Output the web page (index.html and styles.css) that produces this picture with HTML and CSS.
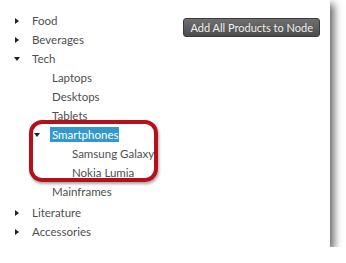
FILE: index.html
```html
<!DOCTYPE html>
<html>
<head>
    <title>Product Tree</title>
    <link rel="stylesheet" href="styles.css">
</head>
<body>
    <div class="panel">
        <ul class="tree">
            <li><span class="toggle closed"></span><span class="label">Food</span></li>
            <li><span class="toggle closed"></span><span class="label">Beverages</span></li>
            <li>
                <span class="toggle open"></span><span class="label">Tech</span>
                <ul>
                    <li><span class="label">Laptops</span></li>
                    <li><span class="label">Desktops</span></li>
                    <li><span class="label">Tablets</span></li>
                    <li class="marked">
                        <span class="toggle open"></span><span class="label selected">Smartphones</span>
                        <ul>
                            <li><span class="label">Samsung Galaxy</span></li>
                            <li><span class="label">Nokia Lumia</span></li>
                        </ul>
                    </li>
                    <li><span class="label">Mainframes</span></li>
                </ul>
            </li>
            <li><span class="toggle closed"></span><span class="label">Literature</span></li>
            <li><span class="toggle closed"></span><span class="label">Accessories</span></li>
        </ul>

        <div class="actions">
            <button class="btn">Add All Products to Node</button>
        </div>
    </div>
</body>
</html>
```

FILE: styles.css
```css
body {
    margin: 0;
    background-color: white;
    font-family: Lato, "Open Sans", sans-serif;
}

.panel {
    width: 330px;
    height: 247px;
    background-color: white;
    box-shadow: 4px 4px 8px rgba(0, 0, 0, 0.6);
    display: flex;
    justify-content: space-between;
}

.tree,
.tree ul {
    list-style: none;
    margin: 0;
    padding: 0;
}

.tree {
    padding: 11px 0 0 12px;
}

.tree ul {
    padding-left: 20px;
}

.tree > li > ul {
    padding-bottom: 2px;
}

.tree li {
    position: relative;
    font-size: 11.5px;
    color: #4f4f4f;
    line-height: 19px;
}

.label {
    display: inline-block;
    margin: 2px 0 2px 18px;
    padding: 0 2px;
    line-height: 15px;
}

.toggle {
    position: absolute;
    left: 3px;
    top: 7px;
    width: 0;
    height: 0;
}

.toggle.closed {
    border-top: 3px solid transparent;
    border-bottom: 3px solid transparent;
    border-left: 4px solid #222;
}

.toggle.open {
    top: 8px;
    left: 2px;
    border-left: 3px solid transparent;
    border-right: 3px solid transparent;
    border-top: 4px solid #222;
}

.selected {
    background-color: #3399cc;
    color: white;
    padding-right: 1px;
}

.marked::before {
    content: "";
    position: absolute;
    left: -3px;
    top: -5px;
    width: 121px;
    height: 54px;
    border: 4px solid #b3121c;
    border-radius: 13px;
    box-shadow: 1px 2px 3px rgba(0, 0, 0, 0.35);
    pointer-events: none;
}

.actions {
    padding: 18px 10px 0 0;
}

.btn {
    display: block;
    font-family: Lato, "Open Sans", sans-serif;
    font-size: 11px;
    color: #eee;
    height: 19px;
    padding: 0 6px;
    border: 1px solid #3a3a3a;
    border-radius: 3px;
    background: linear-gradient(#707070, #4c4c4c);
    cursor: pointer;
}
```
